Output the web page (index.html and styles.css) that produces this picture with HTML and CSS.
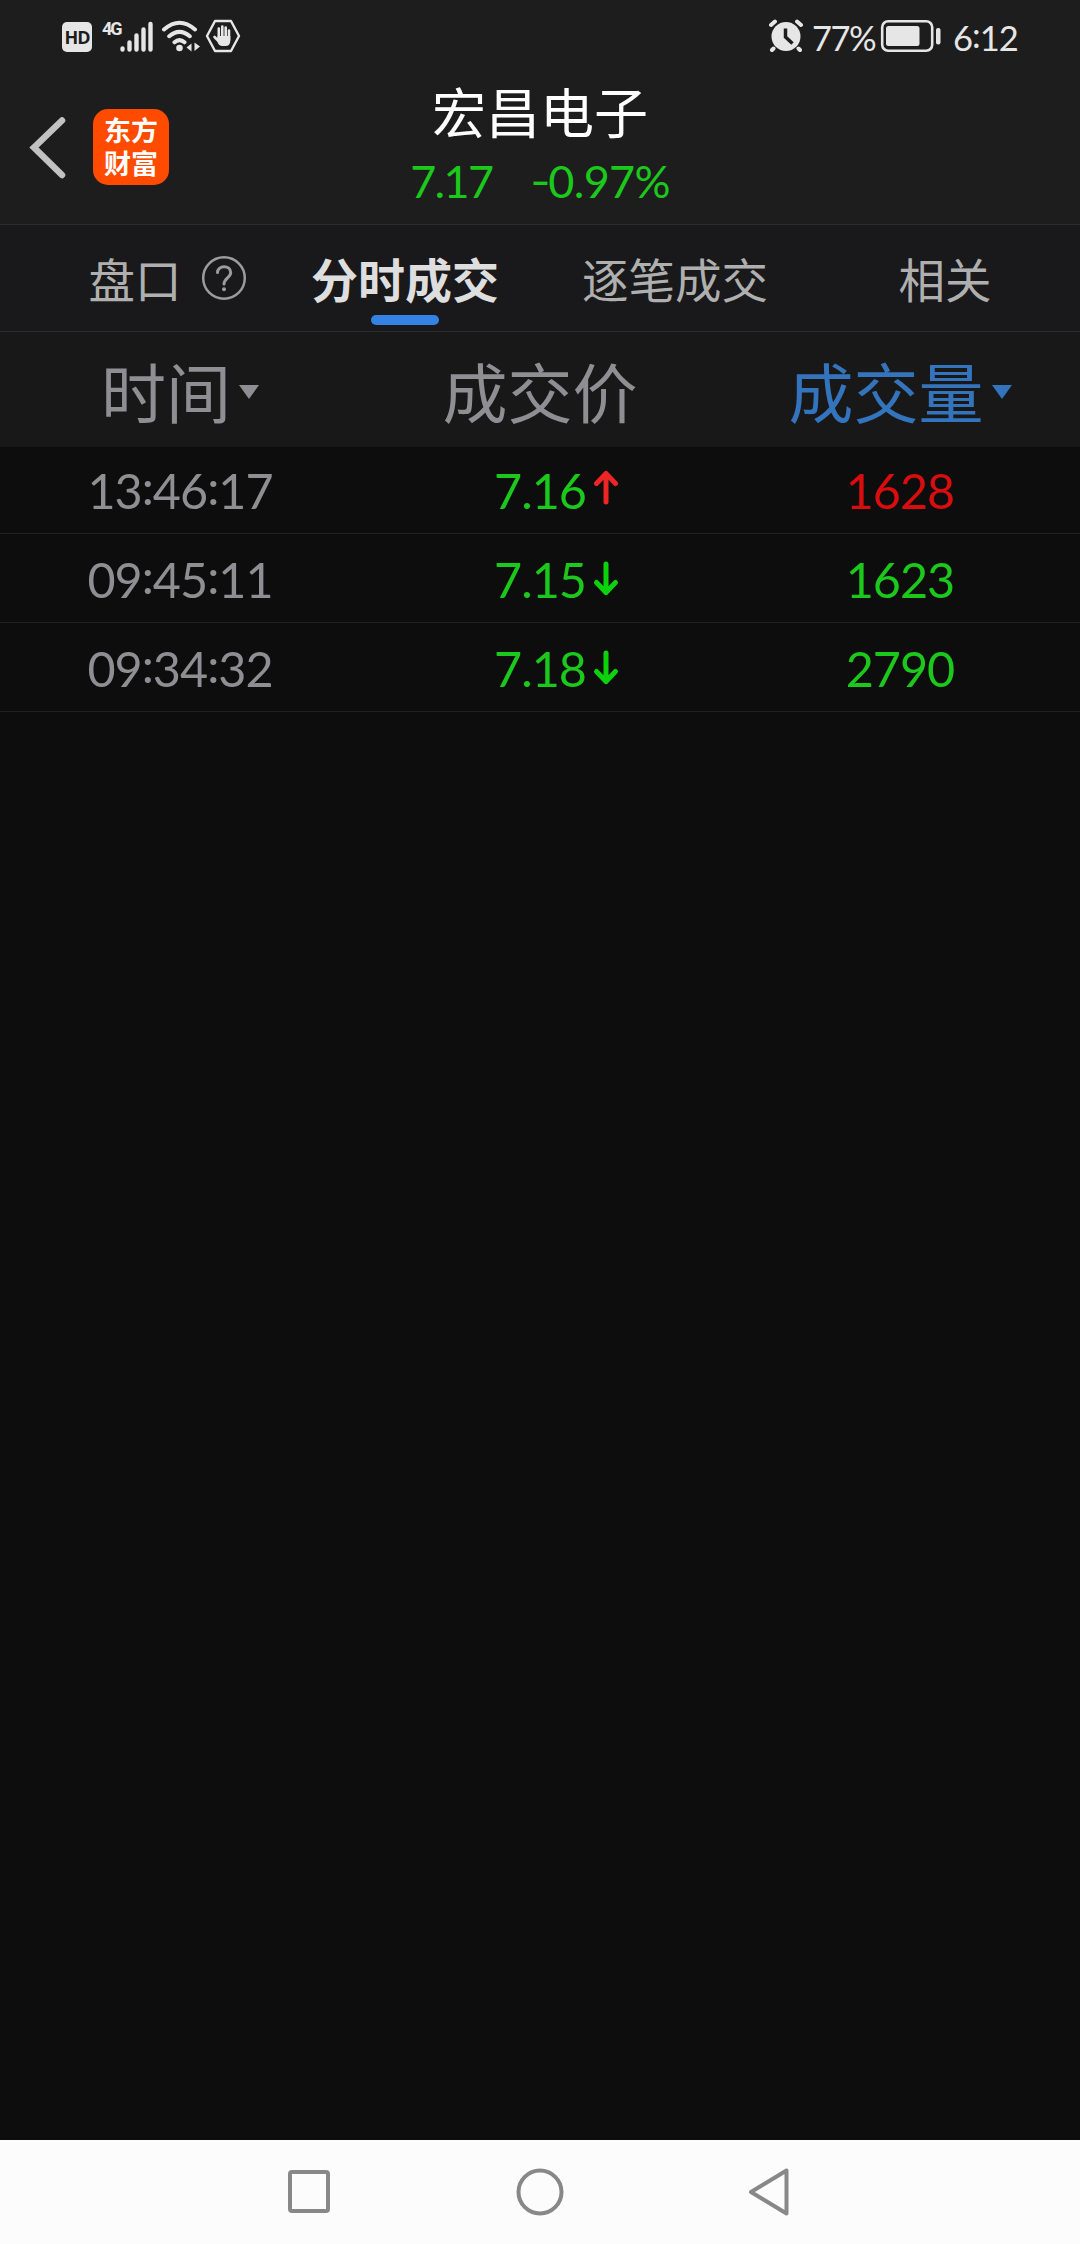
FILE: index.html
```html
<!DOCTYPE html>
<html lang="zh-CN">
<head>
<meta charset="utf-8">
<title>宏昌电子</title>
<link rel="stylesheet" href="styles.css">
</head>
<body>
<div class="screen">
  <div class="status">
    <span class="hd">HD</span>
    <div class="signal">
      <span class="net">4G</span>
      <svg class="bars" width="52" height="34" viewBox="0 0 52 34"><path d="M20.500 29.500v1M27.500 23.500v7M34.500 16.500v14M41.500 10.500v20M48.500 5v25.500" stroke="#e6e6e6" stroke-width="4.400" stroke-linecap="round"/></svg>
    </div>
    <svg class="wifi" width="40" height="34" viewBox="0 0 40 34" fill="none" stroke="#e6e6e6" stroke-linecap="round">
      <path d="M3 10.500Q18.500-3 34 10.500M8.200 17.200Q18.500 8.500 28.800 17.200M13.500 23.300Q18.500 19 23.500 23.300" stroke-width="4"/>
      <circle cx="18.500" cy="29" r="3.300" fill="#e6e6e6" stroke="none"/>
      <path d="M25.500 28.500l5-4v8zM39 27.500l-5.500-4v8.500z" fill="#e6e6e6" stroke="none"/>
    </svg>
    <svg class="hand" width="36" height="34" viewBox="0 0 36 34" fill="none" stroke="#e6e6e6" stroke-linecap="round" stroke-linejoin="round">
      <path d="M10 2h16l8 15-8 15H10L2 17z" stroke-width="2.400"/>
      <path d="M13.800 9.500V20M17.300 7.500V20M20.700 8.500V20M24 11.500V21M9.500 18l5 5" stroke-width="2.600"/>
      <path d="M12.500 17h12.800v4.500q0 5.500-5 5.500h-3q-3.500 0-4.800-4z" fill="#e6e6e6" stroke="none"/>
    </svg>
    <div class="status-right">
      <svg class="alarm" width="36" height="34" viewBox="0 0 36 34">
        <circle cx="18" cy="17.500" r="14.500" fill="#e6e6e6"/>
        <path d="M3 6l4-3.500M33 6l-4-3.500M5.500 29.500L4 31M30.500 29.500L32 31" stroke="#e6e6e6" stroke-width="4" stroke-linecap="round"/>
        <path d="M17.500 9.500v8.500l7 6.500" stroke="#1d1d1e" stroke-width="3.500" fill="none"/>
      </svg>
      <span class="pct">77%</span>
      <svg class="battery" width="62" height="34" viewBox="0 0 62 34">
        <rect x="2.200" y="2.200" width="50" height="29.600" rx="6" fill="none" stroke="#e6e6e6" stroke-width="2.600"/>
        <rect x="6" y="7" width="33.500" height="20" rx="2.500" fill="#e6e6e6"/>
        <rect x="56" y="9" width="4.500" height="16.500" rx="2" fill="#e6e6e6"/>
      </svg>
      <span class="clock">6<i>:</i>12</span>
    </div>
  </div>

  <header class="header">
    <div class="header-left">
      <svg width="38" height="64" viewBox="0 0 38 64"><path d="M34 5.500L6 32.500 34 60" fill="none" stroke="#c2c2c2" stroke-width="6.500" stroke-linecap="round"/></svg>
      <div class="logo">东方<br>财富</div>
    </div>
    <div class="stock">
      <h1 class="name">宏昌电子</h1>
      <div class="quote"><span class="last">7.17</span><span class="change"><b class="minus">-</b>0.97%</span></div>
    </div>
  </header>

  <nav class="tabs">
    <div class="tab"><span class="tab-label">盘口
      <svg class="help" width="46" height="46" viewBox="0 0 46 46" fill="none" stroke="#9c9c9c"><circle cx="23" cy="23" r="20.800" stroke-width="2.500"/><path d="M16.500 17.500c0-3.500 3-5.800 6.500-5.800s6.700 2.200 6.700 5.800c0 5-6.700 5.700-6.700 11.500" stroke-width="3" stroke-linecap="round"/><circle cx="23" cy="34.300" r="2" fill="#9c9c9c" stroke="none"/></svg>
    </span></div>
    <div class="tab active"><span class="tab-label">分时成交</span></div>
    <div class="tab"><span class="tab-label">逐笔成交</span></div>
    <div class="tab"><span class="tab-label">相关</span></div>
  </nav>

  <main class="table">
    <div class="thead">
      <div class="th time-head">时间<i class="caret"></i></div>
      <div class="th">成交价</div>
      <div class="th sorted">成交量<i class="caret"></i></div>
    </div>
    <div class="row">
      <div class="time">13<i>:</i>46<i>:</i>17</div>
      <div class="down"><span class="price">7.16<svg class="arrow up" width="28" height="36" viewBox="0 0 28 36"><path d="M14 32V3.500M4.500 13.500L14 3.500 23.500 13.500"/></svg></span></div>
      <div class="up">1628</div>
    </div>
    <div class="row">
      <div class="time">09<i>:</i>45<i>:</i>11</div>
      <div class="down"><span class="price">7.15<svg class="arrow" width="28" height="36" viewBox="0 0 28 36"><path d="M14 3V31.500M4.500 21.500L14 31.500 23.500 21.500"/></svg></span></div>
      <div class="down">1623</div>
    </div>
    <div class="row">
      <div class="time">09<i>:</i>34<i>:</i>32</div>
      <div class="down"><span class="price">7.18<svg class="arrow" width="28" height="36" viewBox="0 0 28 36"><path d="M14 3V31.500M4.500 21.500L14 31.500 23.500 21.500"/></svg></span></div>
      <div class="down">2790</div>
    </div>
  </main>

  <footer class="navbar">
    <svg width="44" height="50" viewBox="0 0 44 50"><rect x="3" y="5" width="38" height="39" rx="2" /></svg>
    <svg width="50" height="50" viewBox="0 0 50 50"><circle cx="26" cy="25" r="21.500"/></svg>
    <svg width="44" height="50" viewBox="0 0 44 50"><path d="M39.500 3.500v43L4 25z"/></svg>
  </footer>
</div>
</body>
</html>
```
FILE: styles.css
```css
* { box-sizing: border-box; }
body { margin: 0; background: #0d0d0d; }
i { font-style: normal; }
svg { display: block; flex: none; }
.screen {
  width: 1080px;
  height: 2244px;
  display: flex;
  flex-direction: column;
  overflow: hidden;
  background: #0d0d0d;
  font-family: Lato, "Noto Sans CJK SC", sans-serif;
}

.status {
  height: 76px;
  padding: 19px 62px 0;
  display: flex;
  align-items: flex-start;
  background: #1d1d1e;
  color: #e6e6e6;
}
.hd {
  width: 30px;
  height: 30px;
  margin-top: 3px;
  border-radius: 5px;
  background: #e6e6e6;
  color: #1d1d1e;
  font: 700 18px/31px "Open Sans", sans-serif;
  letter-spacing: -1px;
  text-align: center;
}
.signal { display: grid; margin-left: 10px; }
.net, .bars { grid-area: 1 / 1; }
.net { font: 700 18px/20px "Roboto", sans-serif; letter-spacing: -2px; }
.wifi { margin-left: 7px; }
.hand { margin-left: 4px; }
.status-right { margin-left: auto; display: flex; }
.pct, .clock { font-size: 34.500px; line-height: 38px; white-space: nowrap; }
.pct { width: 76px; padding-left: 8px; letter-spacing: -1.500px; }
.clock { width: 66px; margin-left: 10px; padding-left: 1px; letter-spacing: -1px; }
.clock i { position: relative; top: -3px; }

.header {
  height: 149px;
  display: grid;
  grid-template-columns: 1fr 400px 1fr;
  border-bottom: 1px solid #2d2d2e;
  background: #1d1d1e;
}
.header-left { display: flex; align-items: center; height: 142px; padding: 0 0 0 28px; }
.logo {
  width: 76px;
  height: 76px;
  margin-left: 27px;
  padding-top: 4px;
  border-radius: 15px;
  background: #ff4b00;
  color: #fff;
  font: 700 27px/33px "Noto Sans CJK SC", sans-serif;
  text-align: center;
}
.stock { text-align: center; }
.name { margin: 0; color: #fff; font: 400 54px/70px "Noto Sans CJK SC", sans-serif; }
.quote {
  display: flex;
  justify-content: center;
  gap: 40px;
  padding-top: 4px;
  color: #1bc81b;
  font-size: 45px;
  line-height: 62px;
}
.last { letter-spacing: -1.700px; }
.change { letter-spacing: -.7px; }
.minus { display: inline-block; font-weight: 400; transform: translateY(-1px) scaleX(1.25); }

.tabs {
  height: 107px;
  display: grid;
  grid-template-columns: repeat(4, 1fr);
  border-bottom: 1px solid #2d2d2e;
  background: #19191b;
}
.tab {
  display: flex;
  flex-direction: column;
  align-items: center;
  color: #afafaf;
  font: 400 46.500px/68px "Noto Sans CJK SC", sans-serif;
  padding-top: 19px;
}
.tab-label { position: relative; white-space: nowrap; }
.help { position: absolute; left: 112px; top: 11px; }
.active { color: #dedede; font-weight: 700; font-size: 47px; }
.active::after {
  content: "";
  width: 68px;
  height: 10px;
  margin-top: 3px;
  border-radius: 5px;
  background: #3482e3;
}

.table { flex: 1; }
.thead, .row { display: grid; grid-template-columns: repeat(3, 1fr); }
.thead { height: 115px; background: #181818; }
.th {
  display: flex;
  justify-content: center;
  align-items: center;
  gap: 8px;
  color: #8e8e93;
  font: 400 65px/114px "Noto Sans CJK SC", sans-serif;
}
.sorted { color: #3474bd; }
.caret {
  margin-top: 5px;
  border: 10px solid transparent;
  border-top: 14px solid currentColor;
  border-bottom: 0;
}
.row {
  height: 89px;
  border-bottom: 1px solid #212121;
  font-size: 48.500px;
  line-height: 90px;
  letter-spacing: -1px;
  text-align: center;
}
.thead + .row { height: 87px; line-height: 87px; }
.time { color: #8e8e93; }
.time i { position: relative; top: -4px; }
.up { color: #d90d0d; }
.down { color: #1bc81b; }
.price { position: relative; }
.arrow {
  position: absolute;
  left: calc(100% + 6px);
  top: 11px;
  fill: none;
  stroke: #0bd20b;
  stroke-width: 5;
  stroke-linecap: round;
  stroke-linejoin: round;
}
.arrow.up { top: 9px; stroke: #ec2525; }

.navbar {
  height: 104px;
  padding: 0 289px 0 287px;
  display: flex;
  justify-content: space-between;
  align-items: center;
  background: #fcfcfc;
}
.navbar svg { fill: none; stroke: #888; stroke-width: 4; stroke-linejoin: round; }
```
